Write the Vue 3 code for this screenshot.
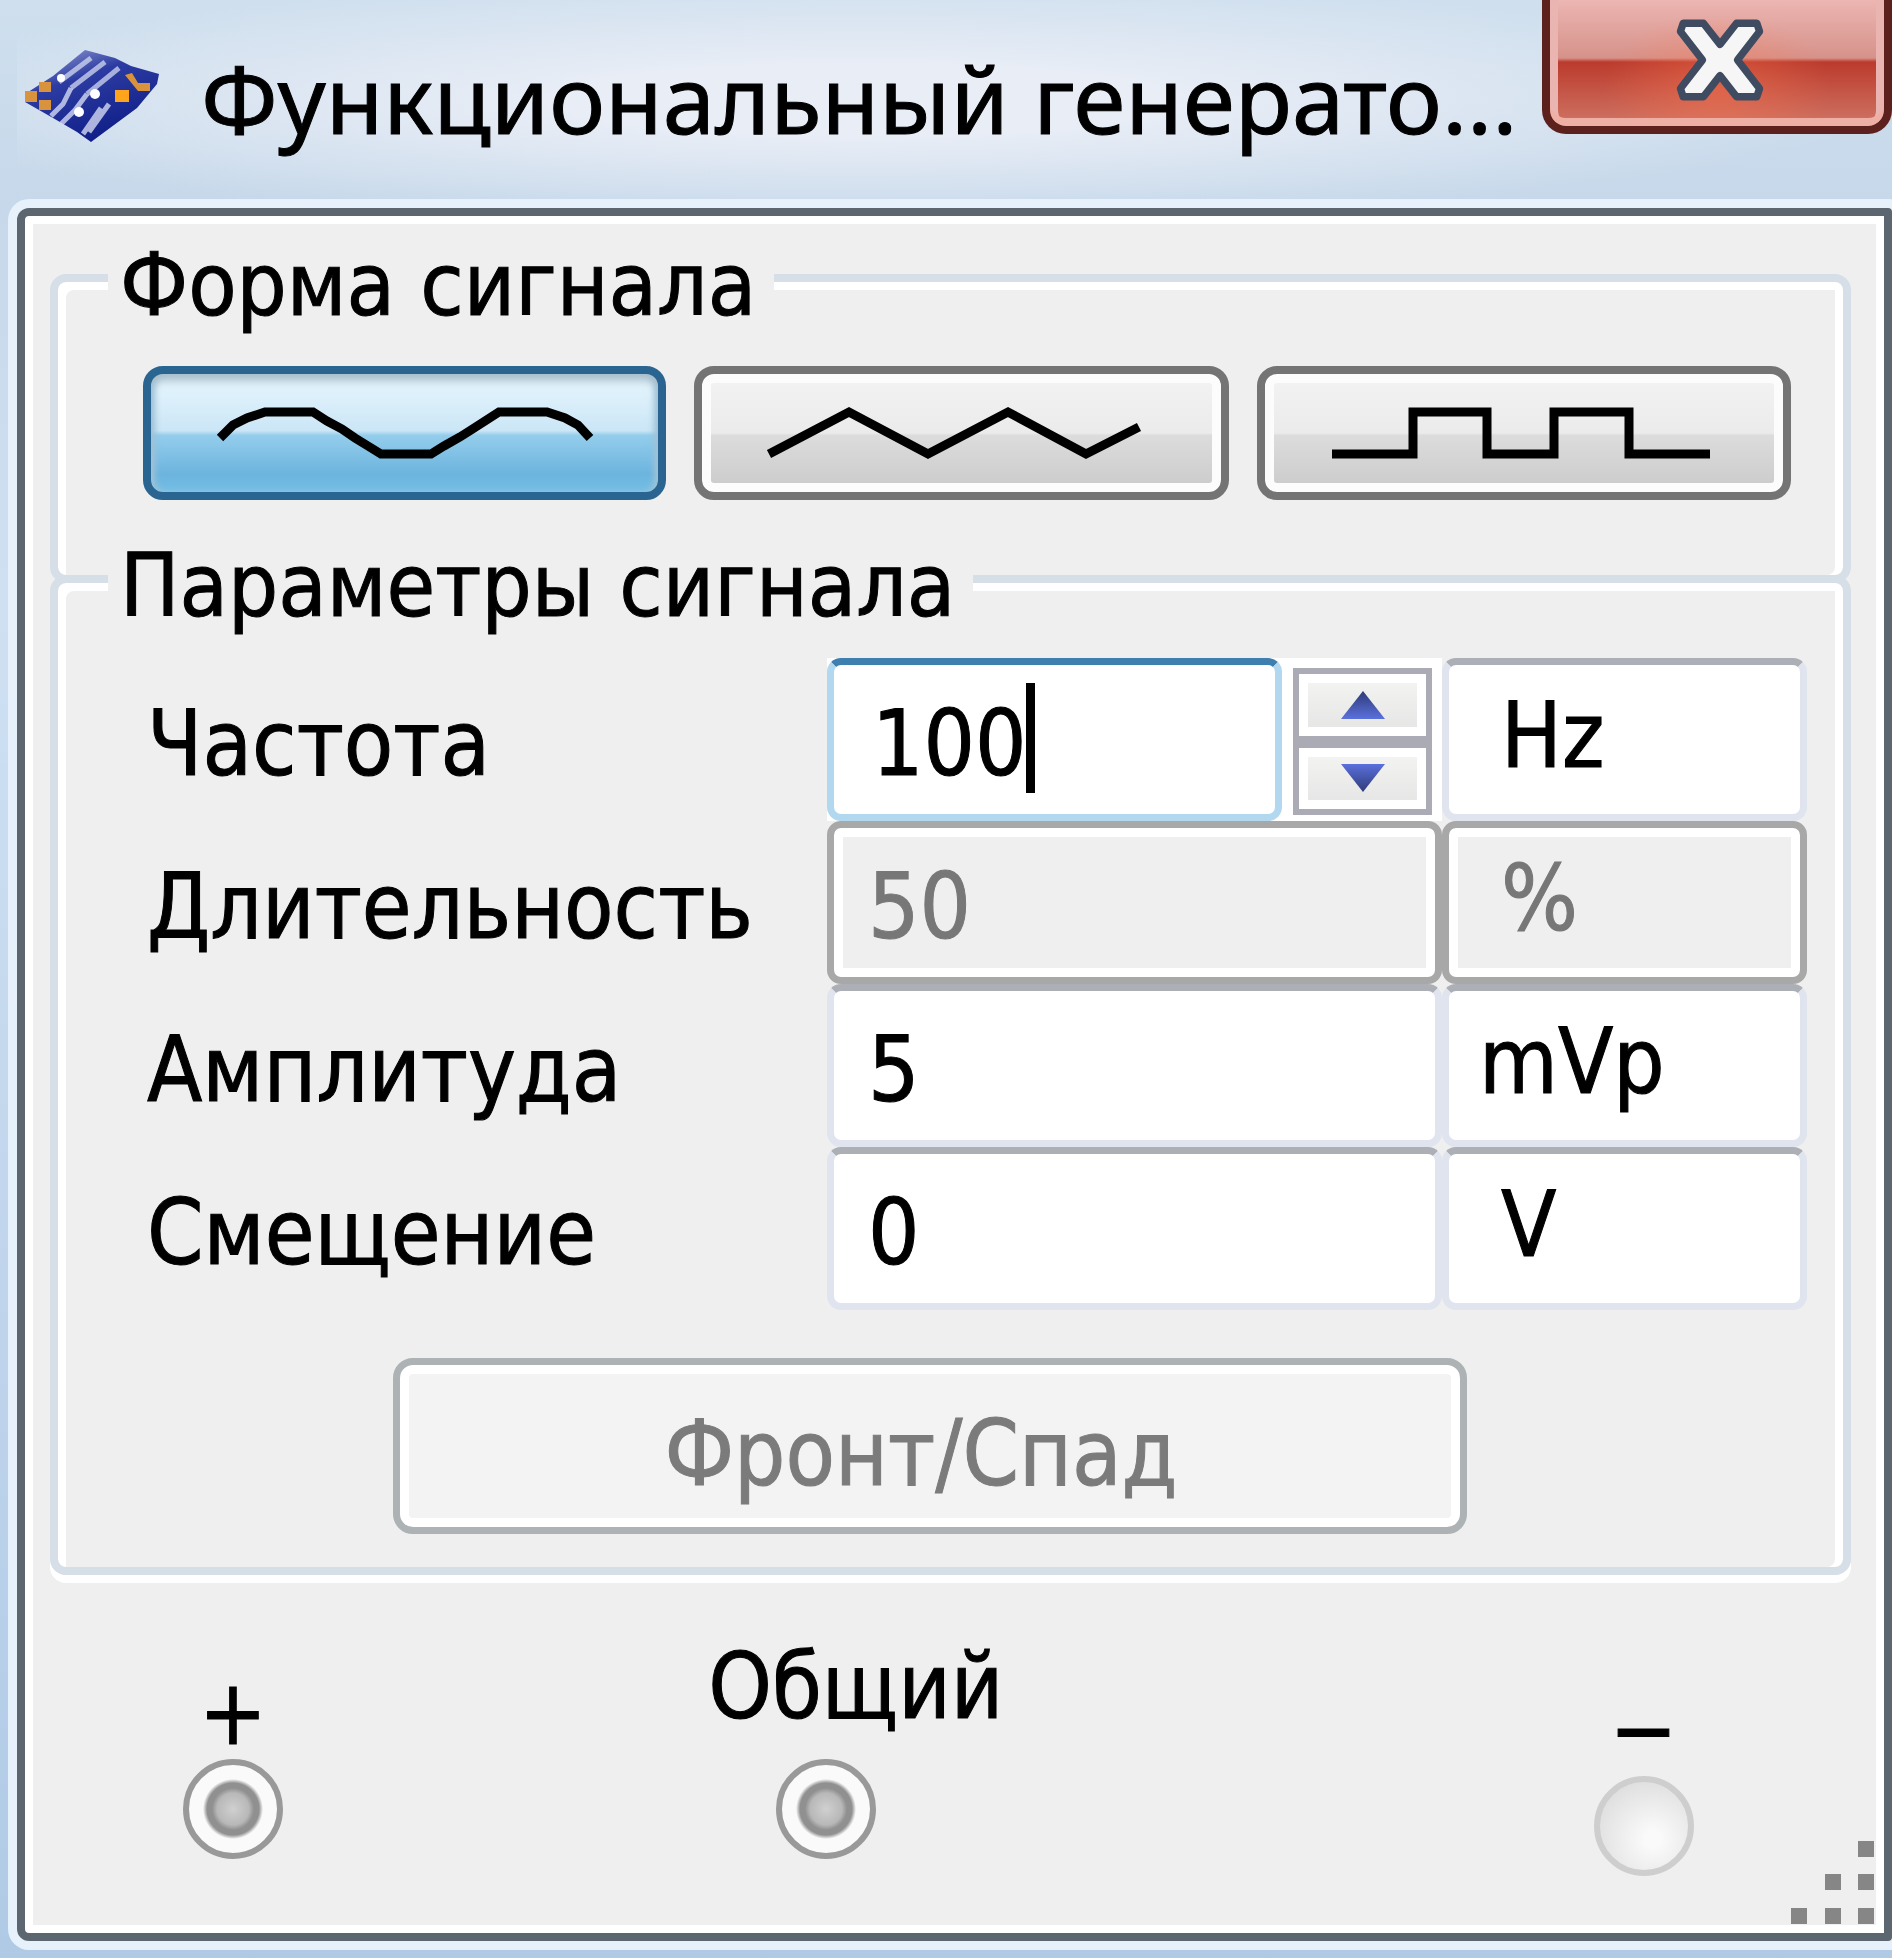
<template>
  <div class="window">
    <header class="title-bar">
      <svg class="app-icon" viewBox="0 0 134 96" aria-hidden="true">
        <defs>
          <linearGradient id="chip" x1="0" y1="0" x2="0.5" y2="1">
            <stop offset="0" stop-color="#a3abdb" />
            <stop offset="0.4" stop-color="#2c3ca2" />
            <stop offset="1" stop-color="#101f88" />
          </linearGradient>
        </defs>
        <path d="M60 2L90 10L106 18L134 26L132 36L112 60L66 94L52 84L28 70L0 54L0 46L28 28Z" fill="url(#chip)" />
        <g fill="none" stroke="#d3d9f2" stroke-width="5">
          <path d="M66 10L34 34M80 14L46 40M94 20L62 46" stroke-opacity="0.75" />
          <path d="M46 40L38 56L26 68M62 46L50 62L36 76M76 60L58 86M84 56L64 84" stroke-opacity="0.8" />
        </g>
        <g fill="#fff">
          <circle cx="70" cy="46" r="5" />
          <circle cx="54" cy="64" r="5" />
          <circle cx="36" cy="30" r="4" />
        </g>
        <g fill="#d8933c">
          <rect x="0" y="43" width="12" height="11" />
          <rect x="14" y="34" width="12" height="10" />
          <rect x="14" y="52" width="12" height="10" />
          <rect x="90" y="42" width="14" height="12" fill="#ffa41c" />
          <path d="M100 27l7-2l6 10l12 0l0 8l-12 0z" />
        </g>
      </svg>
      <h1 class="title">Функциональный генерато...</h1>
      <button class="close" type="button" aria-label="Закрыть">
        <svg viewBox="0 0 100 90" aria-hidden="true">
          <path
            d="M10 5H32L50 28L68 5H90L93 14L69 45L93 76L90 85H68L50 62L32 85H10L7 76L31 45L7 14Z"
            fill="#f6f6f6"
            stroke="#3f4b60"
            stroke-width="8"
            stroke-linejoin="round"
          />
        </svg>
      </button>
    </header>

    <main class="panel">
      <fieldset class="group shape">
        <legend>Форма сигнала</legend>
        <div class="waves">
          <button
            v-for="wave in waves"
            :key="wave.id"
            type="button"
            class="wave"
            :class="{ active: wave.id === shape }"
            :aria-label="wave.label"
            :aria-pressed="wave.id === shape"
            @click="shape = wave.id"
          >
            <svg viewBox="0 0 400 80" aria-hidden="true">
              <polyline :points="wave.points" />
            </svg>
          </button>
        </div>
      </fieldset>

      <fieldset class="group params">
        <legend>Параметры сигнала</legend>
        <div class="rows">
          <div class="row">
            <label for="frequency">Частота</label>
            <div class="spin-field">
              <div class="focused">
                <input id="frequency" v-model="frequency" class="field" type="text" />
                <span class="caret"></span>
              </div>
              <div class="spinner">
                <button type="button" aria-label="Больше" @click="step(1)">
                  <svg viewBox="0 0 44 28" aria-hidden="true">
                    <defs>
                      <linearGradient id="arrow-up" x1="0" y1="0" x2="0" y2="1">
                        <stop offset="0" stop-color="#2f3b78" />
                        <stop offset="1" stop-color="#5a70dc" />
                      </linearGradient>
                    </defs>
                    <path d="M22 0L44 28H0Z" fill="url(#arrow-up)" />
                  </svg>
                </button>
                <button type="button" aria-label="Меньше" @click="step(-1)">
                  <svg viewBox="0 0 44 28" aria-hidden="true">
                    <defs>
                      <linearGradient id="arrow-down" x1="0" y1="0" x2="0" y2="1">
                        <stop offset="0" stop-color="#5a70dc" />
                        <stop offset="1" stop-color="#2f3b78" />
                      </linearGradient>
                    </defs>
                    <path d="M0 0H44L22 28Z" fill="url(#arrow-down)" />
                  </svg>
                </button>
              </div>
            </div>
            <input class="field unit" type="text" value="Hz" aria-label="Единица частоты" />
          </div>
          <div v-for="row in rows" :key="row.id" class="row">
            <label :for="row.id">{{ row.label }}</label>
            <input :id="row.id" v-model="row.value" class="field" type="text" :disabled="row.disabled" />
            <input
              v-model="row.unit"
              class="field unit"
              :class="{ wide: row.unit.length > 2 }"
              type="text"
              :disabled="row.disabled"
              :aria-label="'Единица: ' + row.label"
            />
          </div>
        </div>
        <button class="edge" type="button" disabled>Фронт/Спад</button>
      </fieldset>

      <div class="terminals">
        <label class="terminal plus">
          <span>+</span>
          <input type="radio" name="plus" checked />
        </label>
        <label class="terminal common">
          <span>Общий</span>
          <input type="radio" name="common" checked />
        </label>
        <label class="terminal minus">
          <span>−</span>
          <input type="radio" name="minus" disabled />
        </label>
      </div>

      <svg class="grip" viewBox="0 0 84 84" aria-hidden="true">
        <path d="M67 0h16v16h-16zM34 33h16v16h-16zM67 33h16v16h-16zM0 67h16v16h-16zM34 67h16v16h-16zM67 67h16v16h-16z" />
      </svg>
    </main>
  </div>
</template>

<script setup>
import { ref } from 'vue'

const shape = ref('sine')
const frequency = ref('100')

const waves = [
  {
    id: 'sine',
    label: 'Синус',
    points: '15,45 28,32 42,25 60,19 108,19 122,28 137,36 150,45 163,53 176,61 226,61 239,53 255,44 266,37 280,28 294,19 342,19 360,25 373,32 385,45'
  },
  {
    id: 'triangle',
    label: 'Треугольник',
    points: '8,61 88,19 167,61 247,19 325,61 378,34'
  },
  {
    id: 'square',
    label: 'Прямоугольник',
    points: '8,61 89,61 89,19 163,19 163,61 230,61 230,19 305,19 305,61 386,61'
  }
]

const rows = ref([
  { id: 'duty', label: 'Длительность', value: '50', unit: '%', disabled: true },
  { id: 'amplitude', label: 'Амплитуда', value: '5', unit: 'mVp', disabled: false },
  { id: 'offset', label: 'Смещение', value: '0', unit: 'V', disabled: false }
])

const step = (delta) => {
  frequency.value = String(Number(frequency.value) + delta)
}
</script>

<style>
body {
  margin: 0;
}
</style>

<style scoped>
* {
  box-sizing: border-box;
}

.window {
  min-height: 100vh;
  display: flex;
  flex-direction: column;
  padding: 0 0 17px 17px;
  background: linear-gradient(180deg, #cfdfee 0, #c6d8ea 208px, #cfe0f2 600px, #b0cae6 100%);
  font-family: "DejaVu Sans Condensed", "DejaVu Sans", sans-serif;
  font-size: 90px;
  line-height: 92px;
  color: #000;
  -webkit-text-stroke: 1px currentColor;
}

button,
input {
  font: inherit;
  color: inherit;
  margin: 0;
}

/* title bar */
.title-bar {
  height: 208px;
  display: flex;
  align-items: flex-start;
  background: radial-gradient(ellipse 55% 58% at 45% 48%, #e8edf6 30%, rgba(232, 237, 246, 0) 100%);
}

.app-icon {
  flex: none;
  width: 134px;
  height: 96px;
  margin: 48px 0 0 8px;
}

.title {
  flex: 1;
  min-width: 0;
  margin: 34px 0 0 42px;
  font-family: "Noto Sans", "Open Sans", sans-serif;
  font-size: 94px;
  font-weight: 400;
  line-height: 128px;
  white-space: nowrap;
}

.close {
  flex: none;
  width: 350px;
  height: 134px;
  padding: 8px 0 0 6px;
  display: flex;
  align-items: center;
  justify-content: center;
  border: 8px solid #5c211d;
  border-top: 0;
  border-radius: 0 0 24px 24px;
  background:
    radial-gradient(ellipse 34% 60% at 50% 70%, rgba(255, 120, 80, 0.45), rgba(255, 120, 80, 0)),
    linear-gradient(180deg, #ecb6b2 0, #d6928a 58px, #bb3b2d 62px, #cf7565 100%);
  box-shadow: inset 0 -8px 0 #eeb0a4, inset 8px 0 0 #eab5b0, inset -8px 0 0 #eab5b0;
}

.close svg {
  width: 92px;
  height: 84px;
  margin-bottom: 14px;
}

/* client area */
.panel {
  position: relative;
  flex: 1;
  display: flex;
  flex-direction: column;
  padding: 9px 33px 0 25px;
  border: 8px solid #5b6670;
  border-radius: 12px 4px 4px 12px;
  background: #efefef;
  box-shadow: inset 0 0 0 8px #fff, 0 0 0 9px #e6f1fc;
}

.group {
  min-width: 0;
  margin: 0;
  border: 8px solid #d6dfe7;
  border-radius: 16px;
  box-shadow: inset 8px 8px 0 #fff, inset -8px 0 0 #fff;
}

.group legend {
  padding: 14px 18px 0 12px;
  background: #efefef;
  font-size: 88px;
}

.shape {
  padding: 35px 36px 75px 50px;
}

.params {
  padding: 26px 36px 33px 50px;
  margin-top: -57px;
  box-shadow: inset 8px 8px 0 #fff, inset -8px 0 0 #fff, 0 8px 0 #fff;
}

.waves {
  display: grid;
  grid-template-columns: 523fr 534fr 534fr;
  gap: 28px;
  margin: 0 16px 0 35px;
}

.wave {
  height: 134px;
  padding: 0;
  display: flex;
  align-items: center;
  justify-content: center;
  border: 8px solid #747474;
  border-radius: 20px;
  background: linear-gradient(180deg, #f3f3f3 0, #ebebeb 50%, #dcdcdc 52%, #cacaca 100%);
  box-shadow: inset 0 0 0 9px #fcfcfc;
}

.wave.active {
  border-color: #2a6490;
  background: linear-gradient(180deg, #e8f7fe 0, #cbe6f6 48%, #94cdec 52%, #6cb4de 85%, #74bfe6 100%);
  box-shadow: inset 0 9px 8px -2px #a9bfcc, inset 6px 0 6px -2px #9cc3da, inset -6px 0 6px -2px #9cc3da;
}

.wave svg {
  width: 400px;
  height: 80px;
}

.wave polyline {
  fill: none;
  stroke: #000;
  stroke-width: 9;
}

/* parameter rows */
.rows {
  margin-left: 35px;
}

.row {
  display: grid;
  grid-template-columns: 684fr 615fr 365fr;
  height: 163px;
}

.row > label {
  align-self: center;
  padding: 8px 0 0 4px;
  white-space: nowrap;
}

.field {
  width: 100%;
  min-width: 0;
  height: 100%;
  padding: 8px 34px 0;
  border: 7px solid #e0e4ee;
  border-top-color: #adafb6;
  border-radius: 14px;
  background: #fff;
  outline: none;
}

.unit {
  padding: 0 0 8px 52px;
}

.unit.wide {
  padding-left: 30px;
}

.field:disabled {
  border-color: #a8a8a8;
  background: #efefef;
  box-shadow: inset 0 0 0 9px #fff;
  color: #777;
  opacity: 1;
}

.spin-field {
  display: grid;
  grid-template-columns: 455fr 160fr;
  background: #fff;
}

.focused {
  position: relative;
}

.focused .field {
  padding-left: 38px;
  border-color: #b2d8ef;
  border-top-color: #3f7fb0;
}

.caret {
  position: absolute;
  left: 199px;
  top: 25px;
  width: 9px;
  height: 110px;
  background: #000;
}

.spinner {
  display: flex;
  flex-direction: column;
  margin: 10px 10px 6px 11px;
}

.spinner button {
  flex: 1;
  min-height: 0;
  padding: 0;
  display: flex;
  align-items: center;
  justify-content: center;
  border: 6px solid #aaabb4;
  background: linear-gradient(180deg, #f5f5f3, #e4e4e4);
  box-shadow: inset 0 0 0 9px #fff;
}

.spinner svg {
  width: 44px;
  height: 28px;
}

.edge {
  display: block;
  width: 1074px;
  max-width: 100%;
  height: 176px;
  margin: 48px auto 0 285px;
  padding: 16px 18px 0 0;
  border: 7px solid #adb2b5;
  border-radius: 20px;
  background: #f3f3f3;
  box-shadow: inset 0 0 0 9px #fff;
  color: #7b7b7b;
}

/* output terminals */
.terminals {
  flex: 1;
  display: grid;
  grid-template-columns: 522fr 880fr 224fr;
  align-items: start;
  padding: 60px 32px 0 133px;
}

.terminal {
  justify-self: start;
  display: flex;
  flex-direction: column;
  align-items: center;
}

.terminal input {
  appearance: none;
  width: 100px;
  height: 100px;
  border: 6px solid #999;
  border-radius: 50%;
  background: radial-gradient(circle at 50% 50%, #d0d0d0 0, #b8b8b8 16px, #909090 21px, #909090 26px, #fafafa 30px);
}

.terminal input:disabled {
  border-color: #cecece;
  background: radial-gradient(circle at 60% 65%, #fafafa 10%, #dedede 80%);
}

.plus {
  padding-top: 32px;
}

.common {
  padding-top: 6px;
  align-items: flex-start;
}

.common input {
  margin: 26px 0 0 68px;
}

.minus {
  padding-top: 49px;
}

.grip {
  position: absolute;
  right: 9px;
  bottom: 8px;
  width: 84px;
  height: 84px;
  fill: #868686;
}
</style>
